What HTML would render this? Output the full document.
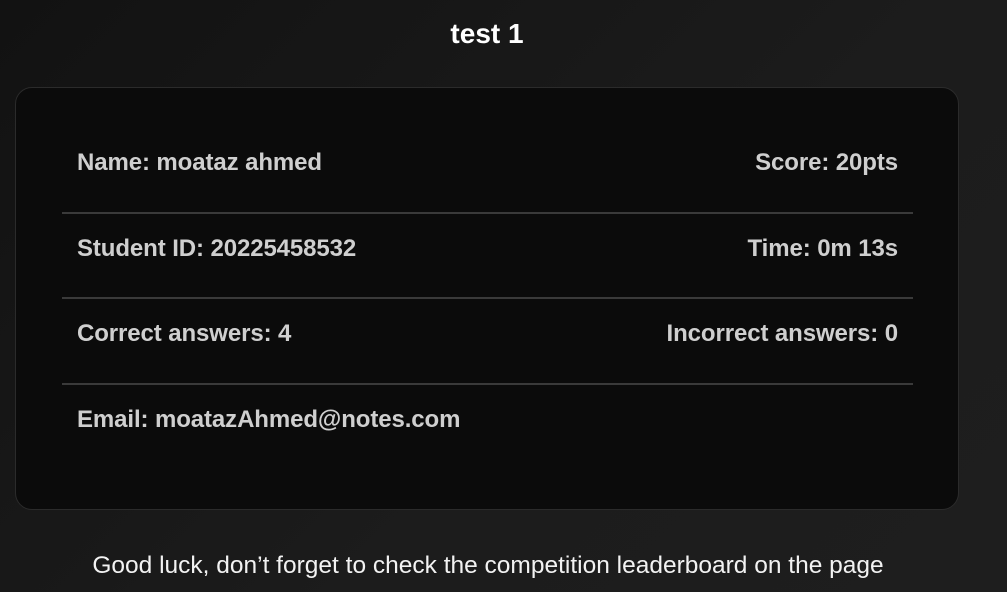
<!DOCTYPE html>
<html><head><meta charset="utf-8"><style>
body{margin:0;width:1007px;height:592px;overflow:hidden;background:linear-gradient(135deg,#121212,#1c1c1c 60%,#1e1e1e);font-family:"Liberation Sans",sans-serif;position:relative}
h1{position:absolute;top:16px;left:0;width:974px;margin:0;text-align:center;color:#fff;font-size:28px;font-weight:bold;line-height:36px}
.card{position:absolute;left:15px;top:87px;width:942px;height:421px;background:#0b0b0b;border:1px solid #2b2b2b;border-radius:17px}
.row{position:absolute;left:62px;width:851px;height:86px;color:#cfcfcf;font-size:24px;font-weight:bold;letter-spacing:-0.1px}
.row span{position:absolute;top:1px;line-height:26px}
.l{left:15px}.r{right:15px}
.line{position:absolute;left:62px;width:851px;height:2px;background:#3a3a3a}
p{position:absolute;top:551px;left:0;width:976px;margin:0;text-align:center;color:#f2f2f2;font-size:24.5px;line-height:30px}
</style></head><body>
<h1>test 1</h1>
<div class="card"></div>
<div class="row" style="top:149px"><span class="l">Name: moataz ahmed</span><span class="r">Score: 20pts</span></div>
<div class="line" style="top:212px"></div>
<div class="row" style="top:235px"><span class="l">Student ID: 20225458532</span><span class="r">Time: 0m 13s</span></div>
<div class="line" style="top:297px"></div>
<div class="row" style="top:320px"><span class="l">Correct answers: 4</span><span class="r">Incorrect answers: 0</span></div>
<div class="line" style="top:383px"></div>
<div class="row" style="top:406px"><span class="l">Email: moatazAhmed@notes.com</span></div>
<p>Good luck, don’t forget to check the competition leaderboard on the page</p>
</body></html>
